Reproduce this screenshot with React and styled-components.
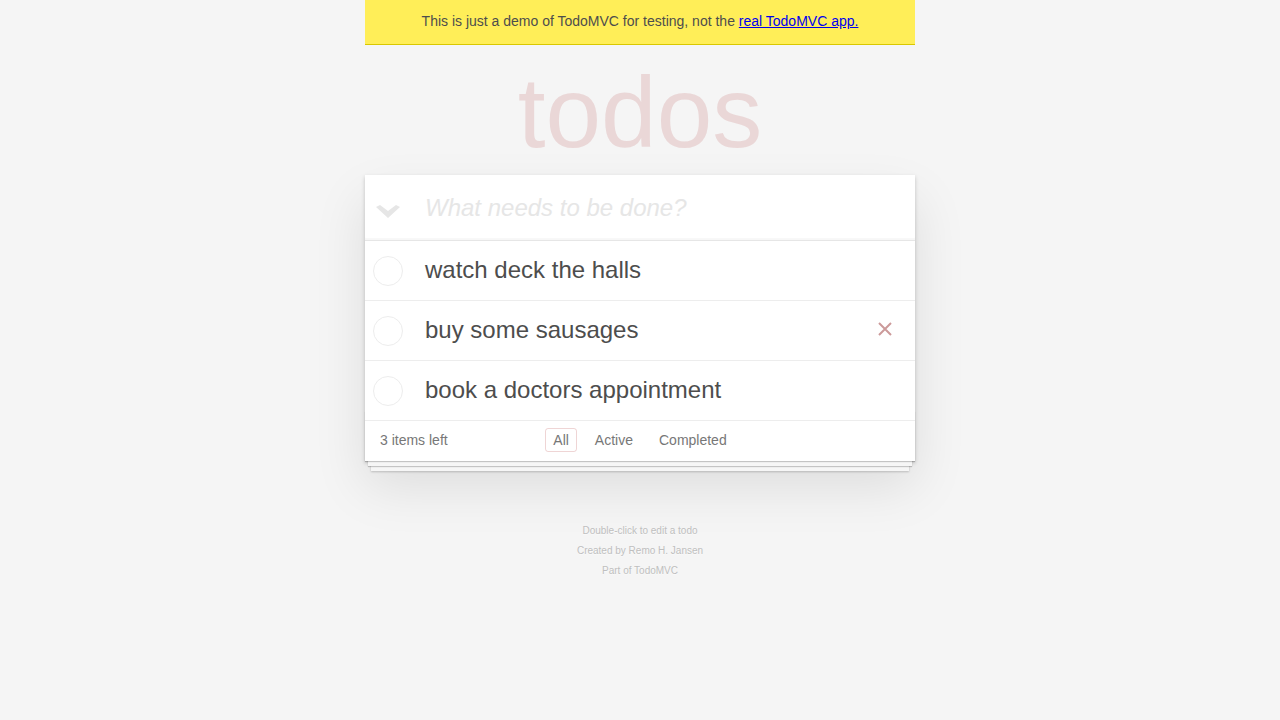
import React from 'react';
import styled, { createGlobalStyle } from 'styled-components';

const GlobalStyle = createGlobalStyle`
  html, body {
    margin: 0;
    padding: 0;
  }
  body {
    background: #f5f5f5;
    font: 14px 'Liberation Sans', Arial, sans-serif;
    line-height: 1.4em;
    color: #4d4d4d;
    min-width: 230px;
  }
`;

const Page = styled.div`
  max-width: 550px;
  margin: 0 auto;
`;

const Banner = styled.div`
  background: #ffee58;
  border-bottom: 1px solid #d9c800;
  padding: 11px 0 13px;
  line-height: 20px;
  text-align: center;
  color: #4d4d4d;

  a {
    color: #0000ee;
    text-decoration: underline;
  }
`;

const Title = styled.h1`
  margin: 17px 0 13px;
  height: 100px;
  font-size: 100px;
  line-height: 100px;
  font-weight: 100;
  text-align: center;
  color: rgba(175, 47, 47, 0.15);
`;

const Card = styled.section`
  background: #fff;
  box-shadow: 0 2px 4px 0 rgba(0, 0, 0, 0.2), 0 25px 50px 0 rgba(0, 0, 0, 0.1);
`;

const Header = styled.header`
  display: flex;
  box-shadow: inset 0 -2px 1px rgba(0, 0, 0, 0.03);
  border-bottom: 1px solid #e6e6e6;
`;

const ToggleAll = styled.div`
  width: 45px;
  display: flex;
  justify-content: center;
  padding-top: 30px;
  box-sizing: border-box;
`;

const NewTodo = styled.input`
  flex: 1;
  min-width: 0;
  border: none;
  outline: none;
  background: transparent;
  padding: 16px 16px 16px 15px;
  font-family: 'Liberation Sans', Arial, sans-serif;
  font-size: 24px;
  line-height: 33px;
  height: 65px;
  box-sizing: border-box;
  color: #4d4d4d;

  &::placeholder {
    font-style: italic;
    font-weight: 300;
    color: #e6e6e6;
  }
`;

const List = styled.ul`
  margin: 0;
  padding: 0;
  list-style: none;
`;

const Item = styled.li`
  display: flex;
  align-items: center;
  border-bottom: 1px solid #ededed;
  font-size: 24px;
`;

const Check = styled.span`
  width: 45px;
  display: flex;
  justify-content: center;

  &::before {
    content: '';
    width: 30px;
    height: 30px;
    border-radius: 50%;
    border: 1px solid #ededed;
    box-sizing: border-box;
    margin-top: 1px;
  }
`;

const Label = styled.label`
  flex: 1;
  padding: 14px 15px 16px;
  line-height: 29px;
  color: #4d4d4d;
  word-break: break-all;
`;

const Destroy = styled.button`
  width: 40px;
  height: 40px;
  margin: -3px 10px 0 0;
  border: none;
  background: none;
  padding: 0;
  display: flex;
  align-items: center;
  justify-content: center;
  visibility: ${(p) => (p.$shown ? 'visible' : 'hidden')};
`;

const Footer = styled.footer`
  position: relative;
  display: grid;
  grid-template-columns: 1fr auto 1fr;
  align-items: start;
  padding: 10px 15px;
  height: 20px;
  line-height: 20px;
  color: #777;

  &::before {
    content: '';
    position: absolute;
    right: 0;
    bottom: 0;
    left: 0;
    height: 50px;
    overflow: hidden;
    pointer-events: none;
    box-shadow: 0 1px 1px rgba(0, 0, 0, 0.2),
      0 8px 0 -3px #f6f6f6,
      0 9px 1px -3px rgba(0, 0, 0, 0.2),
      0 16px 0 -6px #f6f6f6,
      0 17px 2px -6px rgba(0, 0, 0, 0.2);
  }
`;

const Count = styled.span`
  text-align: left;
  margin-top: -1px;
`;

const Filters = styled.ul`
  display: flex;
  gap: 10px;
  margin: -3px 0 0;
  padding: 0;
  list-style: none;
`;

const Filter = styled.a`
  display: block;
  color: inherit;
  text-decoration: none;
  padding: 3px 7px;
  line-height: 16px;
  border: 1px solid ${(p) => (p.$selected ? 'rgba(175, 47, 47, 0.2)' : 'transparent')};
  border-radius: 3px;
`;

const Info = styled.footer`
  margin-top: 60px;
  color: #bfbfbf;
  font-size: 10px;
  text-align: center;
  text-shadow: 0 1px 0 rgba(255, 255, 255, 0.5);

  p {
    margin: 0;
    line-height: 20px;
  }
`;

const Chevron = () => (
  <svg width="24" height="14" viewBox="0 0 24 14">
    <polygon points="0,2 4,0 12,6 20,0 24,2 12,13" fill="#e6e6e6" />
  </svg>
);

const Cross = () => (
  <svg width="14" height="14" viewBox="0 0 14 14">
    <path d="M1 1 L13 13 M13 1 L1 13" stroke="#cc9a9a" strokeWidth="2" />
  </svg>
);

const todos = [
  { title: 'watch deck the halls' },
  { title: 'buy some sausages', hover: true },
  { title: 'book a doctors appointment' },
];

const App = () => (
  <>
    <GlobalStyle />
    <Page>
      <Banner>
        This is just a demo of TodoMVC for testing, not the{' '}
        <a href="#">real TodoMVC app.</a>
      </Banner>
      <Title>todos</Title>
      <Card>
        <Header>
          <ToggleAll>
            <Chevron />
          </ToggleAll>
          <NewTodo placeholder="What needs to be done?" />
        </Header>
        <List>
          {todos.map((t) => (
            <Item key={t.title}>
              <Check />
              <Label>{t.title}</Label>
              <Destroy $shown={t.hover}>
                <Cross />
              </Destroy>
            </Item>
          ))}
        </List>
        <Footer>
          <Count>3 items left</Count>
          <Filters>
            <li><Filter href="#/" $selected>All</Filter></li>
            <li><Filter href="#/active">Active</Filter></li>
            <li><Filter href="#/completed">Completed</Filter></li>
          </Filters>
          <span />
        </Footer>
      </Card>
      <Info>
        <p>Double-click to edit a todo</p>
        <p>Created by Remo H. Jansen</p>
        <p>Part of TodoMVC</p>
      </Info>
    </Page>
  </>
);

export default App;
